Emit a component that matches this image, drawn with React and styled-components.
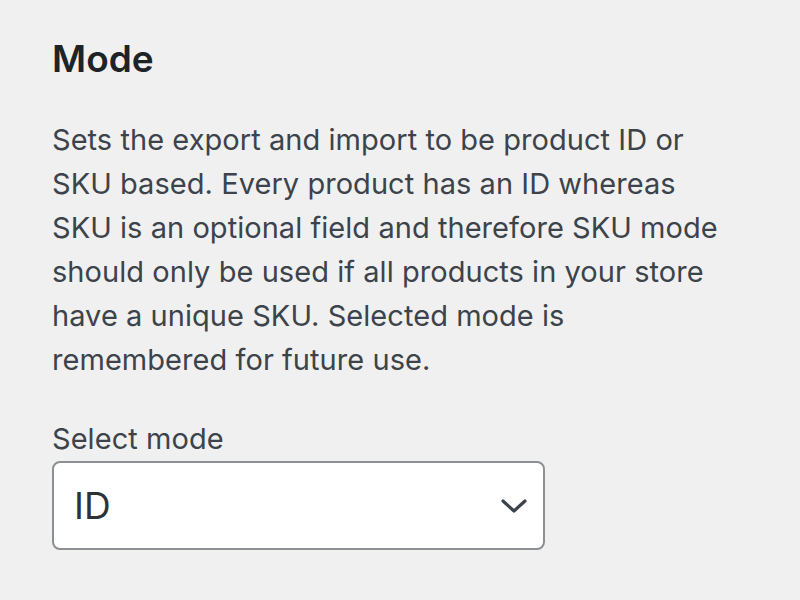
import React from "react";
import styled, { createGlobalStyle } from "styled-components";

const GlobalStyle = createGlobalStyle`
  html, body {
    margin: 0;
    padding: 0;
    background: #f0f0f1;
  }
  body {
    font-family: Inter, "Noto Sans", sans-serif;
    color: #3c434a;
    -webkit-font-smoothing: antialiased;
  }
`;

const Panel = styled.section`
  width: 800px;
  height: 600px;
  box-sizing: border-box;
  padding: 37px 52px 0 52px;
  display: flex;
  flex-direction: column;
`;

const Title = styled.h2`
  margin: 0;
  font-size: 37px;
  line-height: 44px;
  font-weight: 600;
  color: #1d2327;
`;

const Description = styled.p`
  margin: 37px 0 0 0;
  max-width: 675px;
  font-size: 29px;
  letter-spacing: 0.05px;
  line-height: 44px;
  color: #3c434a;
`;

const Field = styled.div`
  margin-top: 37px;
  display: flex;
  flex-direction: column;
  gap: 2px;
`;

const Label = styled.label`
  font-size: 29px;
  letter-spacing: 0.05px;
  line-height: 40px;
  color: #3c434a;
`;

const SelectBox = styled.div`
  width: 493px;
  height: 89px;
  box-sizing: border-box;
  display: flex;
  align-items: center;
  justify-content: space-between;
  padding: 0 16px 0 20px;
  background: #fff;
  border: 2px solid #8c8f94;
  border-radius: 8px;
`;

const Value = styled.span`
  font-size: 37px;
  color: #2c3338;
`;

const Chevron = () => (
  <svg width="26" height="14" viewBox="0 0 26 14" fill="none">
    <path d="M2 2 L13 12 L24 2" stroke="#3c434a" strokeWidth="3.2" strokeLinecap="round" strokeLinejoin="round" />
  </svg>
);

export default function App() {
  return (
    <>
      <GlobalStyle />
      <Panel>
        <Title>Mode</Title>
        <Description>
          Sets the export and import to be product ID or SKU based. Every product has an ID whereas SKU is
          an optional field and therefore SKU mode should only be used if all products in your store have a
          unique SKU. Selected mode is remembered for future use.
        </Description>
        <Field>
          <Label>Select mode</Label>
          <SelectBox>
            <Value>ID</Value>
            <Chevron />
          </SelectBox>
        </Field>
      </Panel>
    </>
  );
}
